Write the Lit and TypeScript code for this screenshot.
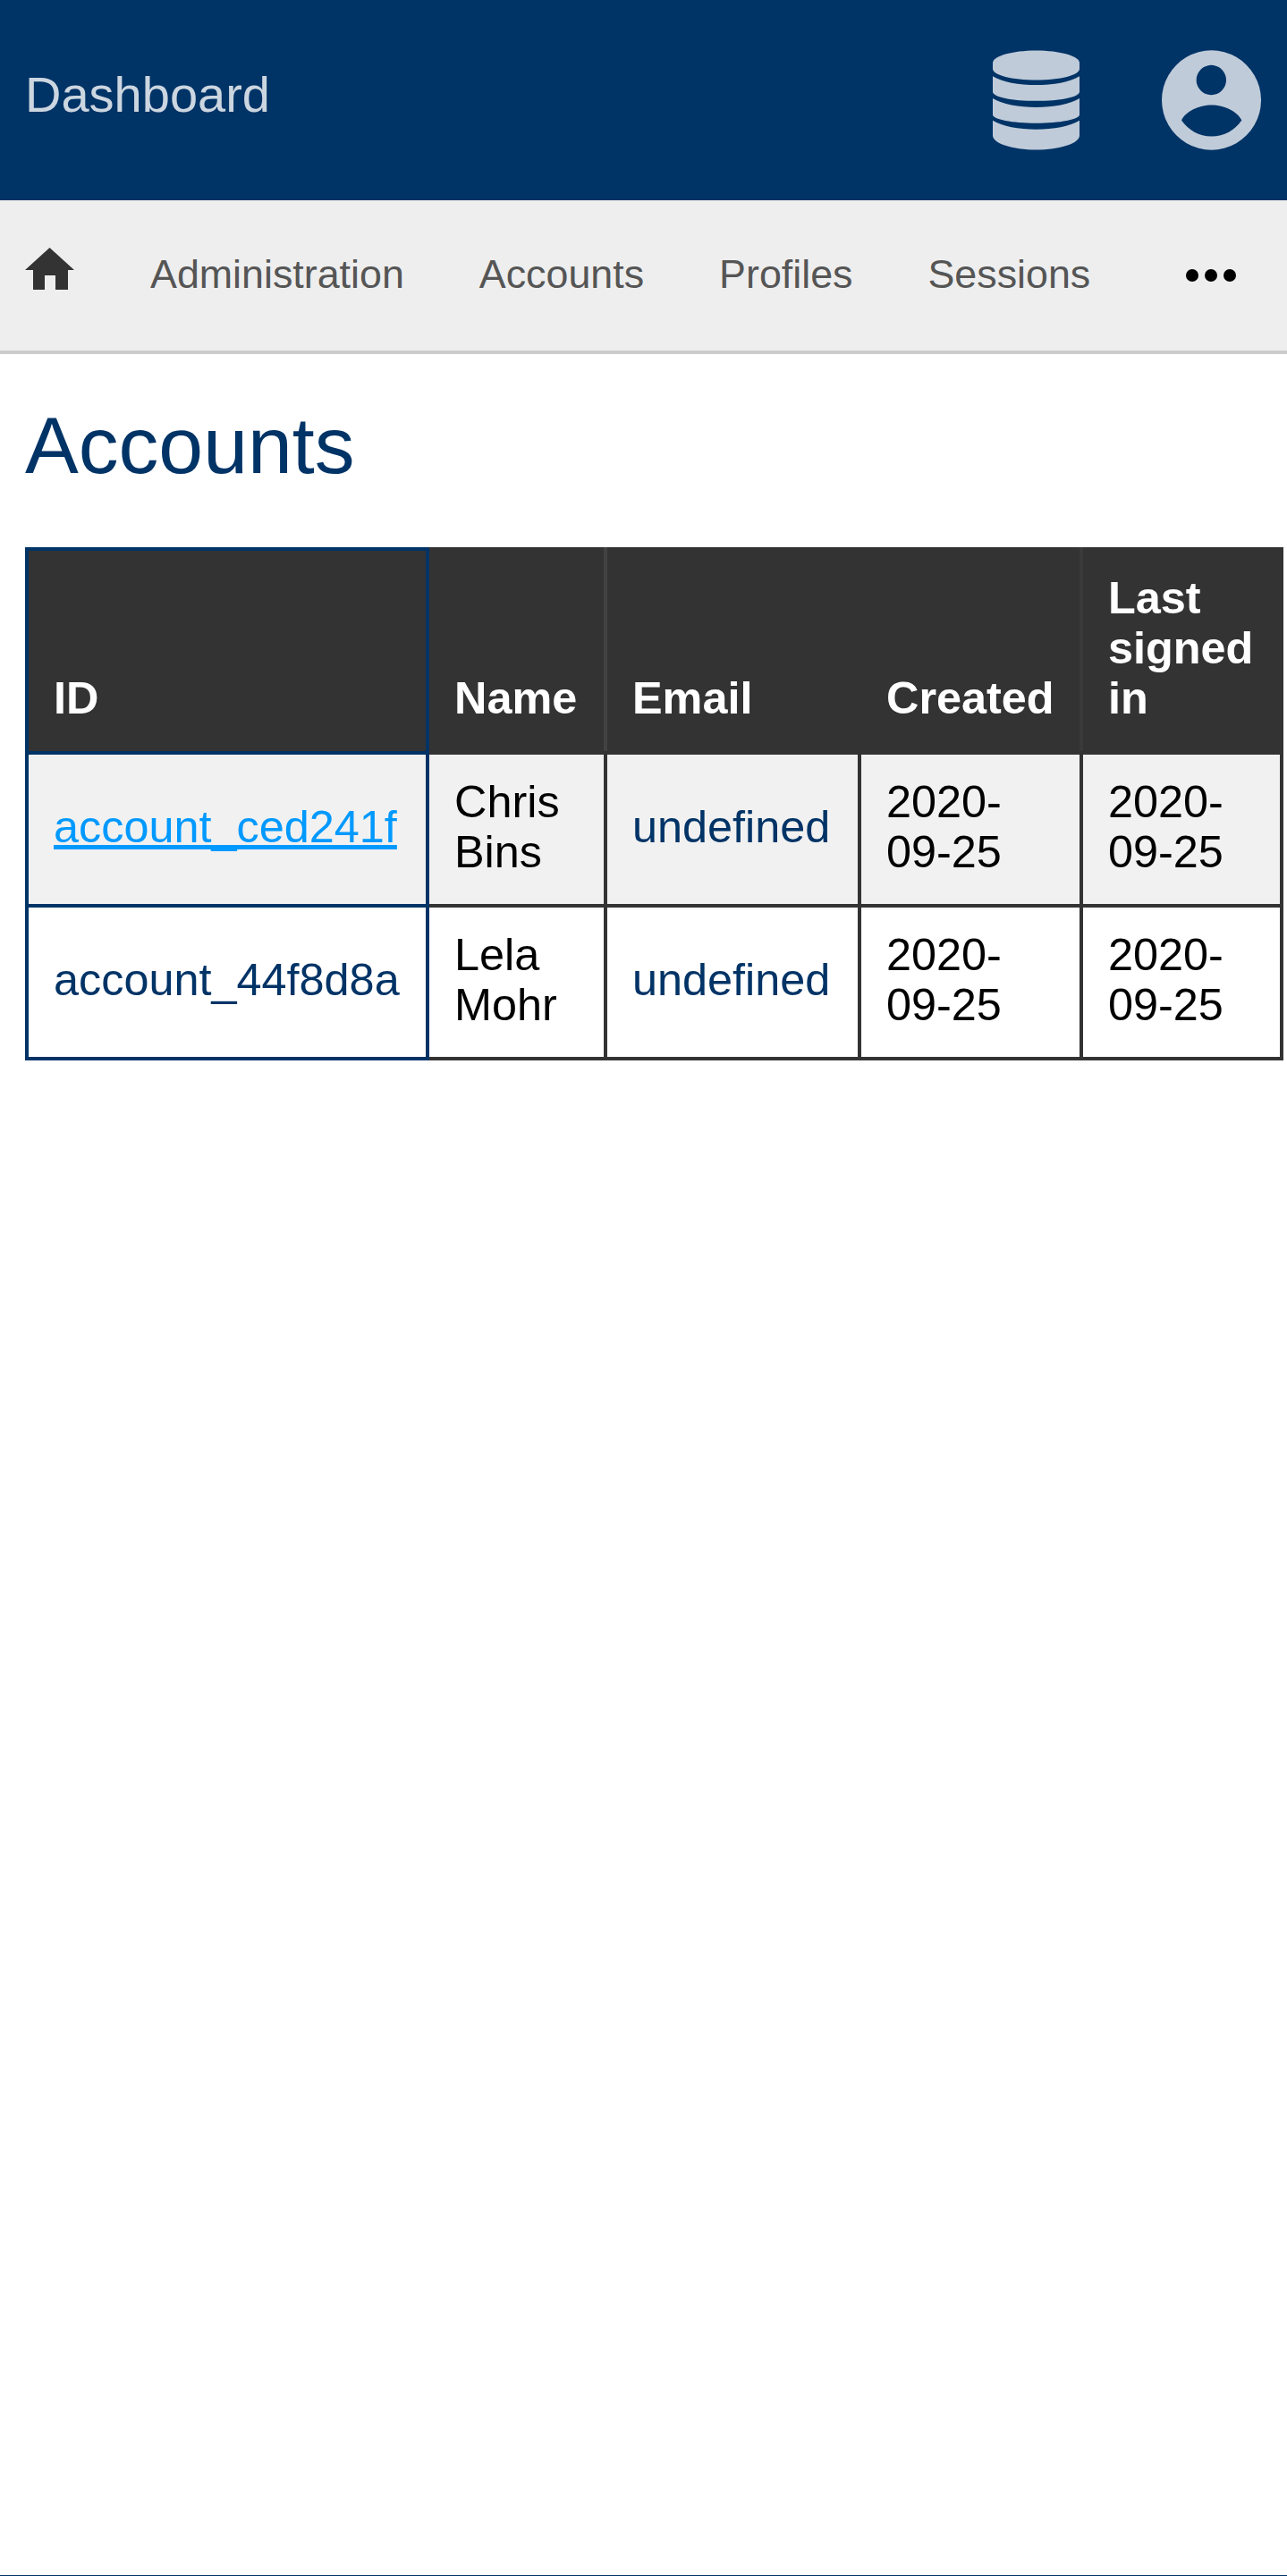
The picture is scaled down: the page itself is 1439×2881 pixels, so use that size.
import { LitElement, css, html } from "lit";
import { customElement } from "lit/decorators.js";

const accounts = [
  { id: "account_ced241f", name: "Chris Bins", link: true },
  { id: "account_44f8d8a", name: "Lela Mohr", link: false },
];

@customElement("app-root")
export class AppRoot extends LitElement {
  static styles = css`
    :host {
      display: flex;
      flex-direction: column;
      min-height: 2881px;
      background: #fff;
      font-family: "Liberation Sans", Arial, sans-serif;
      color: #000;
    }
    .topbar {
      display: flex;
      align-items: center;
      height: 224px;
      padding: 0 29px 0 28px;
      background: #003366;
    }
    .brand {
      flex: 1;
      padding-bottom: 14px;
      font-size: 56px;
      color: #ccd6e0;
    }
    .topbar svg {
      display: block;
      height: 112px;
      fill: #bfcbd9;
    }
    .db {
      width: 97px;
    }
    .user {
      width: 111px;
      margin-left: 92px;
    }
    .nav {
      display: flex;
      align-items: center;
      gap: 84px;
      height: 168px;
      padding: 0 29px 0 28px;
      background: #eeeeee;
      border-bottom: 4px solid #cccccc;
      font-size: 44.8px;
      color: #555555;
    }
    .nav > span {
      padding-bottom: 4px;
    }
    .home {
      display: block;
      width: 55px;
      height: 47px;
      margin: 0 1px 15px 0;
      fill: #333333;
    }
    .more {
      display: flex;
      gap: 7px;
      margin-left: auto;
      margin-right: 28px;
    }
    .more span {
      width: 14px;
      height: 14px;
      border-radius: 50%;
      background: #000;
    }
    main {
      flex: 1;
      padding-left: 28px;
    }
    h1 {
      margin: 50px 0 62px;
      font-size: 89.6px;
      line-height: 104px;
      font-weight: 400;
      color: #003366;
    }
    table {
      width: 1407px;
      table-layout: fixed;
      border-collapse: collapse;
      font-size: 50.4px;
      line-height: 56px;
    }
    .c-id {
      width: 448px;
    }
    .c-name {
      width: 199px;
    }
    .c-email {
      width: 284px;
    }
    .c-created {
      width: 248px;
    }
    .c-last {
      width: 224px;
    }
    th,
    td {
      padding: 25px 28px 30px;
      border: 4px solid #333333;
      text-align: left;
    }
    th {
      padding: 25px 28px 31px;
      vertical-align: bottom;
      font-weight: 700;
      color: #fff;
      background: #333333;
    }
    td {
      vertical-align: middle;
    }
    th:first-child,
    td:first-child {
      border-color: #003366;
    }
    th:nth-child(2) {
      border-right-color: #424242;
    }
    th:nth-child(4) {
      border-right-color: #3a3a3a;
    }
    tbody tr:nth-child(odd) {
      background: #f1f1f1;
    }
    .muted {
      color: #003366;
    }
    a {
      color: #0099ff;
      text-decoration: underline;
    }
    .rule {
      height: 1px;
      background: #003366;
    }
  `;

  render() {
    return html`
      <header class="topbar">
        <div class="brand">Dashboard</div>
        <svg class="db" viewBox="0 0 448 512">
          <path d="M448 64v30c0 32-100 58-224 58S0 126 0 94V64C0 29 100 0 224 0s224 29 224 64z" />
          <path d="M448 132v81c0 27-101 47-224 47S0 240 0 213v-81c48 30 136 46 224 46s176-16 224-46z" />
          <path d="M448 247v84c0 24-101 44-224 44S0 355 0 331v-84c48 30 136 46 224 46s176-16 224-46z" />
          <path d="M448 361v77c0 41-101 74-224 74S0 479 0 438v-77c48 30 136 46 224 46s176-16 224-46z" />
        </svg>
        <svg class="user" viewBox="0 0 333 335">
          <path
            fill-rule="evenodd"
            d="M166.500 0.500a166.500 167 0 1 0 0.010 0zM166 50a50 50 0 1 1-0.010 0zM66 235C80 205 125 184 167 184S254 205 268 235C245 268 210 289 167 289S90 268 66 235z"
          />
        </svg>
      </header>
      <nav class="nav">
        <svg class="home" viewBox="0 0 55 47">
          <path d="M27.500 0L55 25H48V47H34V31H22V47H9V25H0z" />
        </svg>
        <span>Administration</span>
        <span>Accounts</span>
        <span>Profiles</span>
        <span>Sessions</span>
        <div class="more"><span></span><span></span><span></span></div>
      </nav>
      <main>
        <h1>Accounts</h1>
        <table>
          <colgroup>
            <col class="c-id" />
            <col class="c-name" />
            <col class="c-email" />
            <col class="c-created" />
            <col class="c-last" />
          </colgroup>
          <thead>
            <tr>
              <th>ID</th>
              <th>Name</th>
              <th>Email</th>
              <th>Created</th>
              <th>Last signed in</th>
            </tr>
          </thead>
          <tbody>
            ${accounts.map(
              (a) => html`
                <tr>
                  <td class="muted">
                    ${a.link ? html`<a href="#">${a.id}</a>` : a.id}
                  </td>
                  <td>${a.name}</td>
                  <td class="muted">undefined</td>
                  <td>2020-09-25</td>
                  <td>2020-09-25</td>
                </tr>
              `
            )}
          </tbody>
        </table>
      </main>
      <div class="rule"></div>
    `;
  }
}
